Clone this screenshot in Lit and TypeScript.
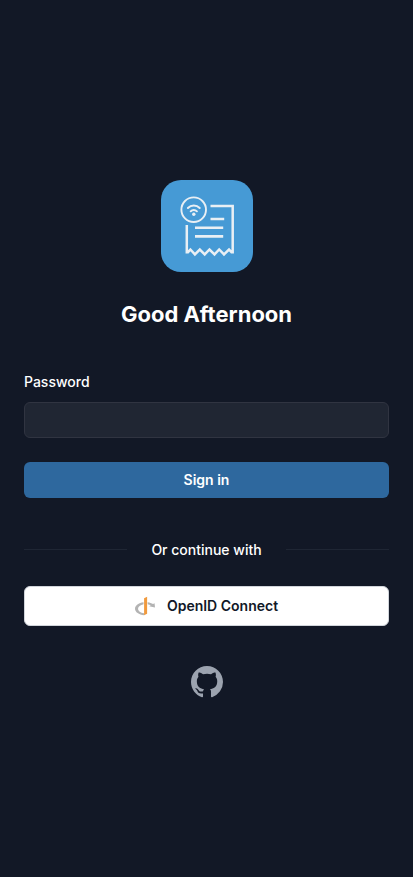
import { LitElement, html, css } from "lit";
import { customElement } from "lit/decorators.js";

@customElement("app-logo")
export class AppLogo extends LitElement {
  static styles = css`
    :host {
      display: block;
      width: 92px;
      height: 92px;
    }
    svg {
      display: block;
      width: 100%;
      height: 100%;
    }
  `;

  render() {
    return html`
      <svg viewBox="0 0 92 92" role="img" aria-label="Logo" fill="none" stroke="#e9eff4">
        <rect width="92" height="92" rx="20" fill="#469ad5" stroke="none" />
        <circle cx="32.700" cy="29.700" r="12.300" stroke-width="1.900" />
        <g stroke-width="2" stroke-linecap="round">
          <path d="M26.900 28a8.200 8.200 0 0 1 11.800 0" />
          <path d="M29.700 31.300a4.200 4.200 0 0 1 6.200 0" />
        </g>
        <circle cx="32.800" cy="34.300" r="1.700" fill="#e9eff4" stroke="none" />
        <path
          stroke-width="2.500"
          d="M49.500 26H71.700V72.200H70.500L68 69.500 63 74.400 58.200 69.500 53.500 74.400 48.500 69.500 43.700 74.400 38.800 69.500 33.900 74.400 29.400 69.500 27 72.200H25.800V45"
        />
        <path stroke-width="2.600" d="M49.500 39H63.200M34 47.700H62.200M34 56.400H62.200" />
      </svg>
    `;
  }
}

@customElement("app-root")
export class AppRoot extends LitElement {
  static styles = css`
    :host {
      display: block;
      font-family: Inter, "Liberation Sans", sans-serif;
      font-size: 14px;
      line-height: 24px;
      color: #ffffff;
    }
    * {
      box-sizing: border-box;
    }
    main {
      display: flex;
      flex-direction: column;
      align-items: center;
      justify-content: center;
      min-height: 100vh;
      padding: 48px 24px;
      background: #121826;
    }
    h1 {
      margin: 24px 0 38px;
      font-size: 22px;
      line-height: 36px;
      font-weight: 700;
      text-align: center;
    }
    .panel {
      width: 100%;
      max-width: 480px;
    }
    form {
      display: flex;
      flex-direction: column;
    }
    label {
      font-weight: 500;
    }
    input {
      width: 100%;
      height: 36px;
      margin: 8px 0 24px;
      padding: 6px 12px;
      border: 1px solid #303441;
      border-radius: 6px;
      background: #202633;
      color: inherit;
      font: inherit;
    }
    button {
      display: flex;
      align-items: center;
      justify-content: center;
      width: 100%;
      padding: 6px 12px;
      border: 0;
      border-radius: 6px;
      font: inherit;
      font-weight: 600;
      cursor: pointer;
    }
    .primary {
      background: #2e689e;
      color: #ffffff;
    }
    .divider {
      display: flex;
      align-items: center;
      gap: 24px;
      margin: 40px 0 24px;
      font-weight: 500;
    }
    .divider::before,
    .divider::after {
      content: "";
      flex: 1;
      height: 1px;
      background: #1f2634;
    }
    .provider {
      gap: 12px;
      padding: 7px 12px;
      border: 1px solid #d1d5db;
      background: #ffffff;
      color: #111827;
    }
    .provider svg {
      width: 20px;
      height: 20px;
    }
    .source {
      display: block;
      margin-top: 40px;
      color: #9ca3af;
    }
    .source svg {
      display: block;
      width: 32px;
      height: 32px;
    }
  `;

  private onSubmit(event: Event) {
    event.preventDefault();
  }

  render() {
    return html`
      <main>
        <app-logo></app-logo>
        <h1>Good Afternoon</h1>
        <div class="panel">
          <form @submit=${this.onSubmit}>
            <label for="password">Password</label>
            <input id="password" name="password" type="password" autocomplete="current-password" />
            <button class="primary" type="submit">Sign in</button>
          </form>
          <div class="divider">Or continue with</div>
          <button class="provider" type="button">
            <svg viewBox="0 0 24 24" aria-hidden="true">
              <path
                fill="#b3b3b3"
                d="M10.910 20.832c-4.150-.520-7.270-2.780-7.270-5.500 0-2.580 2.800-4.750 6.630-5.410v-2.310C4.420 8.322 0 11.502 0 15.332c0 3.960 4.740 7.240 10.910 7.780zM15.180 7.613v2.310c1.430.250 2.710.700 3.760 1.310l-1.970 1.110 7.030 1.530-.500-5.210-1.870 1.060c-1.740-1.060-3.960-1.810-6.450-2.110z"
              />
              <path fill="#f09a3e" d="M14.540.889l-3.630 1.773v20.450l3.630-1.710z" />
            </svg>
            OpenID Connect
          </button>
        </div>
        <a class="source" href="#" aria-label="GitHub">
          <svg viewBox="0 0 16 16" fill="currentColor" aria-hidden="true">
            <path
              d="M8 0C3.580 0 0 3.580 0 8c0 3.540 2.290 6.530 5.470 7.590.4.070.55-.17.55-.38 0-.19-.01-.82-.01-1.490-2.010.37-2.530-.49-2.690-.94-.09-.23-.48-.94-.82-1.130-.28-.15-.68-.52-.01-.53.63-.01 1.080.58 1.230.82.72 1.210 1.870.87 2.330.66.07-.52.28-.87.51-1.070-1.780-.2-3.640-.89-3.640-3.950 0-.87.31-1.590.82-2.150-.08-.2-.36-1.020.08-2.120 0 0 .67-.21 2.200.82.64-.18 1.320-.27 2-.27s1.360.09 2 .27c1.530-1.040 2.200-.82 2.200-.82.44 1.100.16 1.920.08 2.120.51.56.82 1.270.82 2.150 0 3.070-1.870 3.750-3.650 3.950.29.25.54.73.54 1.480 0 1.070-.01 1.930-.01 2.200 0 .21.15.46.55.38A8.010 8.010 0 0 0 16 8c0-4.420-3.580-8-8-8z"
            />
          </svg>
        </a>
      </main>
    `;
  }
}
